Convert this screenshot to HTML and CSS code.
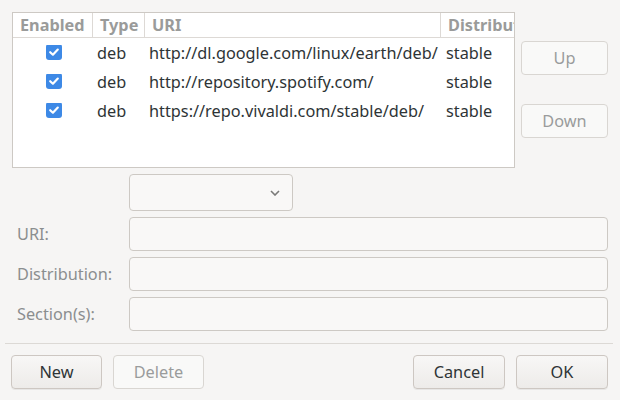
FILE: index.html
```html
<!DOCTYPE html>
<html>
<head>
<meta charset="utf-8">
<link rel="stylesheet" href="styles.css">
</head>
<body>
<div class="dialog">
  <div class="top">
    <div class="table">
      <div class="row head">
        <div class="cell c1">Enabled</div>
        <div class="cell c2">Type</div>
        <div class="cell c3">URI</div>
        <div class="cell c4">Distribution</div>
      </div>
      <div class="row">
        <div class="cell c1"><span class="check"><svg viewBox="0 0 16 16" width="16" height="16"><path d="M4.2 8.2 L6.9 10.7 L11.8 5.6" fill="none" stroke="#fff" stroke-width="2.2" stroke-linecap="round" stroke-linejoin="round"/></svg></span></div>
        <div class="cell c2">deb</div>
        <div class="cell c3">http://dl.google.com/linux/earth/deb/</div>
        <div class="cell c4">stable</div>
      </div>
      <div class="row">
        <div class="cell c1"><span class="check"><svg viewBox="0 0 16 16" width="16" height="16"><path d="M4.2 8.2 L6.9 10.7 L11.8 5.6" fill="none" stroke="#fff" stroke-width="2.2" stroke-linecap="round" stroke-linejoin="round"/></svg></span></div>
        <div class="cell c2">deb</div>
        <div class="cell c3">http://repository.spotify.com/</div>
        <div class="cell c4">stable</div>
      </div>
      <div class="row">
        <div class="cell c1"><span class="check"><svg viewBox="0 0 16 16" width="16" height="16"><path d="M4.2 8.2 L6.9 10.7 L11.8 5.6" fill="none" stroke="#fff" stroke-width="2.2" stroke-linecap="round" stroke-linejoin="round"/></svg></span></div>
        <div class="cell c2">deb</div>
        <div class="cell c3">https://repo.vivaldi.com/stable/deb/</div>
        <div class="cell c4">stable</div>
      </div>
    </div>
    <div class="side">
      <button class="btn disabled up">Up</button>
      <button class="btn disabled down">Down</button>
    </div>
  </div>
  <div class="form">
    <div class="label"></div>
    <div class="combo"><svg viewBox="0 0 10 6" width="10" height="6"><path d="M1 1 L5 5 L9 1" fill="none" stroke="#7a7a78" stroke-width="1.6"/></svg></div>
    <div class="label">URI:</div>
    <div class="field"></div>
    <div class="label">Distribution:</div>
    <div class="field"></div>
    <div class="label">Section(s):</div>
    <div class="field"></div>
  </div>
  <div class="sep"></div>
  <div class="bottom">
    <button class="btn">New</button>
    <button class="btn disabled">Delete</button>
    <div class="spacer"></div>
    <button class="btn">Cancel</button>
    <button class="btn">OK</button>
  </div>
</div>
</body>
</html>
```
FILE: styles.css
```css
html, body {
  margin: 0;
  padding: 0;
  background: #f6f5f4;
  width: 620px;
  height: 400px;
  overflow: hidden;
}
body {
  font-family: "Noto Sans", "Open Sans", sans-serif;
  font-size: 16.3px;
  color: #2e3436;
}
.dialog {
  padding: 12px 0 0 0;
}
.top {
  display: flex;
  padding-left: 12px;
  height: 156px;
}
.table {
  width: 501px;
  height: 154px;
  background: #fff;
  border: 1px solid #cdc9c4;
  overflow: hidden;
}
.row {
  display: grid;
  grid-template-columns: 80px 52px 296px 100px;
  height: 29px;
  align-items: center;
  white-space: nowrap;
}
.row.head {
  height: 24px;
  border-bottom: 1px solid #ddd9d5;
  font-weight: bold;
  color: #9a9b9a;
  align-items: stretch;
}
.head .cell {
  border-right: 1px solid #ddd9d5;
  padding-left: 7px;
  line-height: 24px;
  overflow: hidden;
}
.row .cell { overflow: hidden; }
.row:not(.head) .c2, .row:not(.head) .c3 { padding-left: 4px; }
.row:not(.head) .c4 { padding-left: 5px; }
.row:not(.head) .c1 {
  display: flex;
  justify-content: center;
  padding-left: 2px;
}
.check {
  display: block;
  width: 16px;
  height: 16px;
  border-radius: 3px;
  background: #3d89e6;
  margin-top: -1px;
}
.check svg { display: block; }
.side {
  display: flex;
  flex-direction: column;
  margin-left: 6px;
  padding-top: 29px;
  gap: 29px;
}
.btn {
  font-family: "Noto Sans", "Open Sans", sans-serif;
  font-size: 16.3px;
  color: #2e3436;
  height: 34px;
  width: 91px;
  border: 1px solid #cdc7c2;
  border-radius: 4px;
  background: linear-gradient(#f8f7f6, #edebe9);
  box-shadow: 0 1px 0 rgba(0,0,0,0.06);
  padding: 0;
}
.btn.disabled {
  color: #9a9c9c;
  background: #f9f9f8;
  border-color: #d9d6d2;
  box-shadow: none;
}
.side .btn { width: 87px; }
.form {
  display: grid;
  grid-template-columns: 117px 479px;
  column-gap: 0;
  row-gap: 6px;
  padding-left: 12px;
  margin-top: 6px;
  align-items: center;
}
.label {
  color: #8b8e8f;
  padding-left: 5px;
}
.combo {
  border: 1px solid #cdc9c4;
  border-radius: 4px;
  background: #f9f8f7;
  display: flex;
  align-items: center;
  justify-content: flex-end;
  padding-right: 12px;
  box-sizing: border-box;
  width: 164px;
  height: 37px;
}
.combo svg { display: block; margin-top: 1px; }
.field {
  height: 32px;
  border: 1px solid #cdc9c4;
  border-radius: 4px;
  background: #f9f8f7;
}
.sep {
  margin: 12px 7px 0 5px;
  height: 1px;
  background: #dcd9d5;
}
.bottom {
  display: flex;
  padding: 11px 12px 0 11px;
  gap: 11px;
}
.bottom .spacer { flex: 1; }
.bottom .btn:nth-child(1) { width: 91px; }
.bottom .btn:nth-child(2) { width: 91px; }
.bottom .btn:nth-child(4) { width: 92px; }
.bottom .btn:nth-child(5) { width: 92px; }
```
